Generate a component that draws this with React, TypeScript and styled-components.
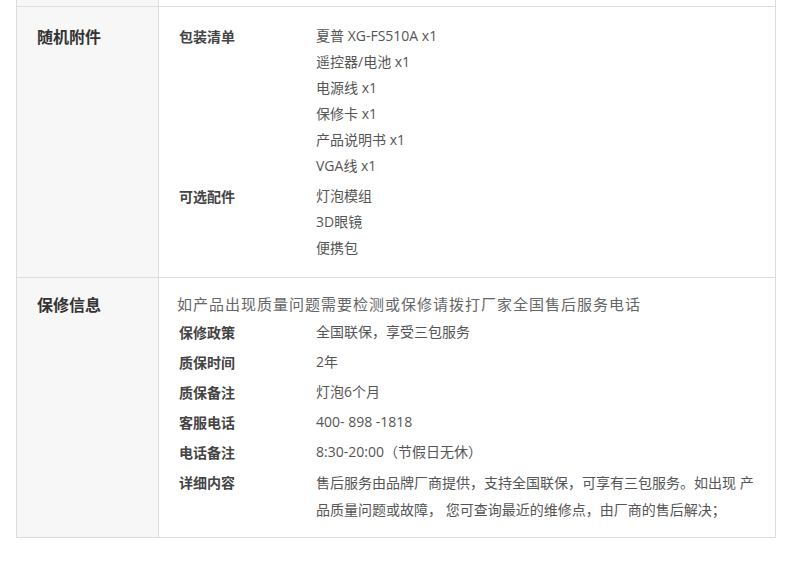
import React from "react";
import styled, { createGlobalStyle } from "styled-components";

const Global = createGlobalStyle`
  html, body { margin: 0; padding: 0; background: #fff; }
  body { font-family: "Noto Sans CJK SC", "Noto Sans", sans-serif; color: #555; }
`;

const Table = styled.div`
  margin: 0 0 0 16px;
  width: 760px;
  box-sizing: border-box;
  border-left: 1px solid #ddd;
  border-right: 1px solid #ddd;
  border-bottom: 1px solid #ddd;
`;

const Section = styled.div<{ $pad: number }>`
  display: grid;
  grid-template-columns: 142px 1fr;
  border-top: 1px solid #ddd;
  --pad: ${(p) => p.$pad}px;
`;

const Spacer = styled.div`
  display: grid;
  grid-template-columns: 142px 1fr;
  height: 6px;
`;

const HeadCell = styled.div`
  background: #f7f7f7;
  border-right: 1px solid #ddd;
  padding: var(--pad, 0) 0 0 20px;
  font-size: 16px;
  font-weight: 700;
  line-height: 26px;
  color: #333;
`;

const BodyCell = styled.div<{ $bottom: number }>`
  padding: var(--pad, 0) 15px ${(p) => p.$bottom}px 20px;
`;

const Group = styled.div<{ $gap?: number }>`
  display: grid;
  grid-template-columns: 137px 1fr;
  margin-top: ${(p) => p.$gap || 0}px;
`;

const Label = styled.div<{ $lh: number }>`
  font-size: 14px;
  font-weight: 700;
  color: #444;
  line-height: ${(p) => p.$lh}px;
`;

const Values = styled.div<{ $lh: number }>`
  font-family: "Open Sans", "Noto Sans CJK SC", sans-serif;
  font-size: 14px;
  color: #555;
  line-height: ${(p) => p.$lh}px;
`;

const Line = styled.div``;

const Intro = styled.div`
  font-size: 15px;
  letter-spacing: 1px;
  color: #666;
  line-height: 26px;
  margin-left: -2px;
  white-space: nowrap;
`;

const Detail = styled.div`
  font-family: "Open Sans", "Noto Sans CJK SC", sans-serif;
  font-size: 14px;
  color: #555;
  line-height: 27px;
  padding-top: 1.5px;
`;

const pack = ["夏普 XG-FS510A x1", "遥控器/电池 x1", "电源线 x1", "保修卡 x1", "产品说明书 x1", "VGA线 x1"];
const optional = ["灯泡模组", "3D眼镜", "便携包"];

const warranty: [string, string][] = [
  ["保修政策", "全国联保，享受三包服务"],
  ["质保时间", "2年"],
  ["质保备注", "灯泡6个月"],
  ["客服电话", "400- 898 -1818"],
  ["电话备注", "8:30-20:00（节假日无休）"],
];

export default function App() {
  return (
    <>
      <Global />
      <Table>
        <Spacer>
          <HeadCell />
          <div />
        </Spacer>
        <Section $pad={16}>
          <HeadCell>随机附件</HeadCell>
          <BodyCell $bottom={16}>
            <Group>
              <Label $lh={26}>包装清单</Label>
              <Values $lh={26}>
                {pack.map((t) => (
                  <Line key={t}>{t}</Line>
                ))}
              </Values>
            </Group>
            <Group $gap={4}>
              <Label $lh={26}>可选配件</Label>
              <Values $lh={26}>
                {optional.map((t) => (
                  <Line key={t}>{t}</Line>
                ))}
              </Values>
            </Group>
          </BodyCell>
        </Section>
        <Section $pad={13}>
          <HeadCell>保修信息</HeadCell>
          <BodyCell $bottom={14}>
            <Intro>如产品出现质量问题需要检测或保修请拨打厂家全国售后服务电话</Intro>
            {warranty.map(([k, v]) => (
              <Group key={k}>
                <Label $lh={30}>{k}</Label>
                <Values $lh={30}>{v}</Values>
              </Group>
            ))}
            <Group>
              <Label $lh={30}>详细内容</Label>
              <Detail>
                售后服务由品牌厂商提供，支持全国联保，可享有三包服务。如出现 产品质量问题或故障， 您可查询最近的维修点，由厂商的售后解决；
              </Detail>
            </Group>
          </BodyCell>
        </Section>
      </Table>
    </>
  );
}
